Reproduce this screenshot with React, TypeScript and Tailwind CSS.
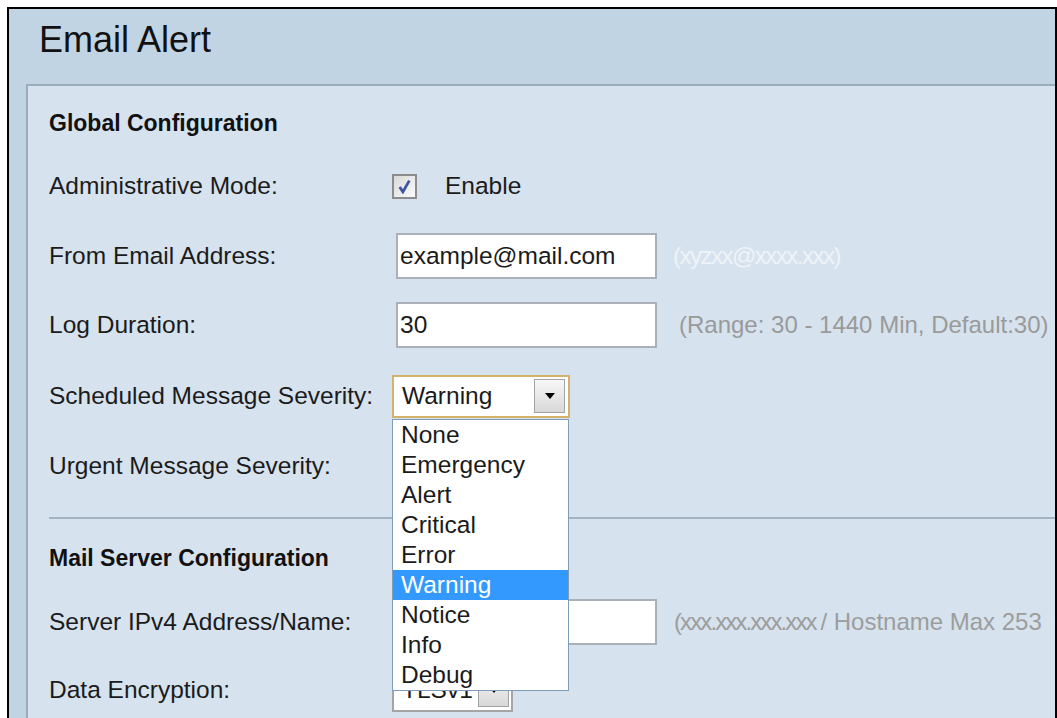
const SEVERITIES = [
  "None",
  "Emergency",
  "Alert",
  "Critical",
  "Error",
  "Warning",
  "Notice",
  "Info",
  "Debug",
];

function Arrow() {
  return (
    <span className="h-0 w-0 border-x-[5px] border-t-[6px] border-x-transparent border-t-black" />
  );
}

function SelectButton() {
  return (
    <span className="flex h-[34px] w-[31px] items-center justify-center border border-[#a2a2a2] bg-gradient-to-b from-[#f8f8f8] to-[#d8d8d8]">
      <Arrow />
    </span>
  );
}

function TextInput({ value }: { value?: string }) {
  return (
    <div className="ml-[4px] flex h-[46px] w-[261px] items-center border-2 border-[#a9b0b7] bg-white pl-[2px] text-[24.5px]">
      {value}
    </div>
  );
}

function Label({ children }: { children: React.ReactNode }) {
  return <div className="w-[343px] shrink-0 text-[24.5px]">{children}</div>;
}

export default function App() {
  return (
    <div className="h-[718px] w-[1057px] overflow-hidden bg-white font-['Liberation_Sans',Arial,sans-serif] text-[#1b1b1b]">
      <div className="ml-[7px] mt-[7px] flex h-[780px] w-[1050px] flex-col border-2 border-black bg-[#c1d4e4]">
        <h1 className="h-[75px] shrink-0 pl-[30px] pt-[11px] text-[36px] leading-[40px] text-[#111]">
          Email Alert
        </h1>

        <div className="ml-[17px] flex-1 border-l-2 border-t-2 border-[#9badba] bg-[#d6e2ee] pl-[21px] pt-[12px]">
          {/* Global settings */}
          <div className="flex h-[50px] items-center text-[23px] font-bold text-[#111]">
            Global Configuration
          </div>

          <div className="flex h-[76px] items-center">
            <Label>Administrative Mode:</Label>
            <span className="flex h-[25px] w-[25px] items-center justify-center border-2 border-[#8c8c8c] bg-gradient-to-br from-[#d9d9d9] to-[#fbfbfb]">
              <svg viewBox="0 0 12 14" className="h-[15px] w-[13px]">
                <path
                  d="M1.5 7.5 L4.5 12 L10.5 1.5"
                  fill="none"
                  stroke="#3c55a5"
                  strokeWidth="2.6"
                />
              </svg>
            </span>
            <span className="ml-[28px] text-[24.5px]">Enable</span>
          </div>

          <div className="flex h-[64px] items-center">
            <Label>From Email Address:</Label>
            <TextInput value="example@mail.com" />
            <span className="ml-[16px] whitespace-nowrap text-[24px] tracking-[-1.5px] text-[#eef3f8]">
              (xyzxx@xxxx.xxx)
            </span>
          </div>

          <div className="flex h-[74px] items-center">
            <Label>Log Duration:</Label>
            <TextInput value="30" />
            <span className="ml-[22px] whitespace-nowrap text-[24px] text-[#9a9a9a]">
              (Range: 30 - 1440 Min, Default:30)
            </span>
          </div>

          <div className="flex h-[68px] items-center">
            <Label>Scheduled Message Severity:</Label>
            <div className="relative">
              <div className="flex h-[43px] w-[178px] items-center border-2 border-[#d3b36c] bg-white pr-[3px]">
                <span className="flex-1 pl-[8px] text-[24.5px]">Warning</span>
                <SelectButton />
              </div>
              <ul className="absolute left-0 top-[44px] z-10 w-[177px] border border-[#7f9db9] bg-white">
                {SEVERITIES.map((s) => (
                  <li
                    key={s}
                    className={
                      s === "Warning"
                        ? "h-[30px] bg-[#3399ff] pl-[8px] text-[24.5px] leading-[30px] text-white"
                        : "h-[30px] pl-[8px] text-[24.5px] leading-[30px]"
                    }
                  >
                    {s}
                  </li>
                ))}
              </ul>
            </div>
          </div>

          <div className="flex h-[72px] items-center">
            <Label>Urgent Message Severity:</Label>
          </div>

          <div className="mt-[15px] h-[2px] bg-[#a3b3c1]" />

          {/* Mail server settings */}
          <div className="flex h-[78px] items-center text-[23px] font-bold text-[#111]">
            Mail Server Configuration
          </div>

          <div className="flex h-[50px] items-center">
            <Label>Server IPv4 Address/Name:</Label>
            <TextInput />
            <span className="ml-[17px] whitespace-nowrap text-[24px] text-[#9d9d9d]">
              <span className="tracking-[-1.9px]">(xxx.xxx.xxx.xxx </span>/
              Hostname Max 253
            </span>
          </div>

          <div className="flex h-[86px] items-center">
            <Label>Data Encryption:</Label>
            <div className="flex h-[43px] w-[121px] items-center border-2 border-[#a5a5a5] bg-white pr-[2px]">
              <span className="flex-1 pl-[8px] text-[24.5px]">TLSv1</span>
              <SelectButton />
            </div>
          </div>
        </div>
      </div>
    </div>
  );
}
